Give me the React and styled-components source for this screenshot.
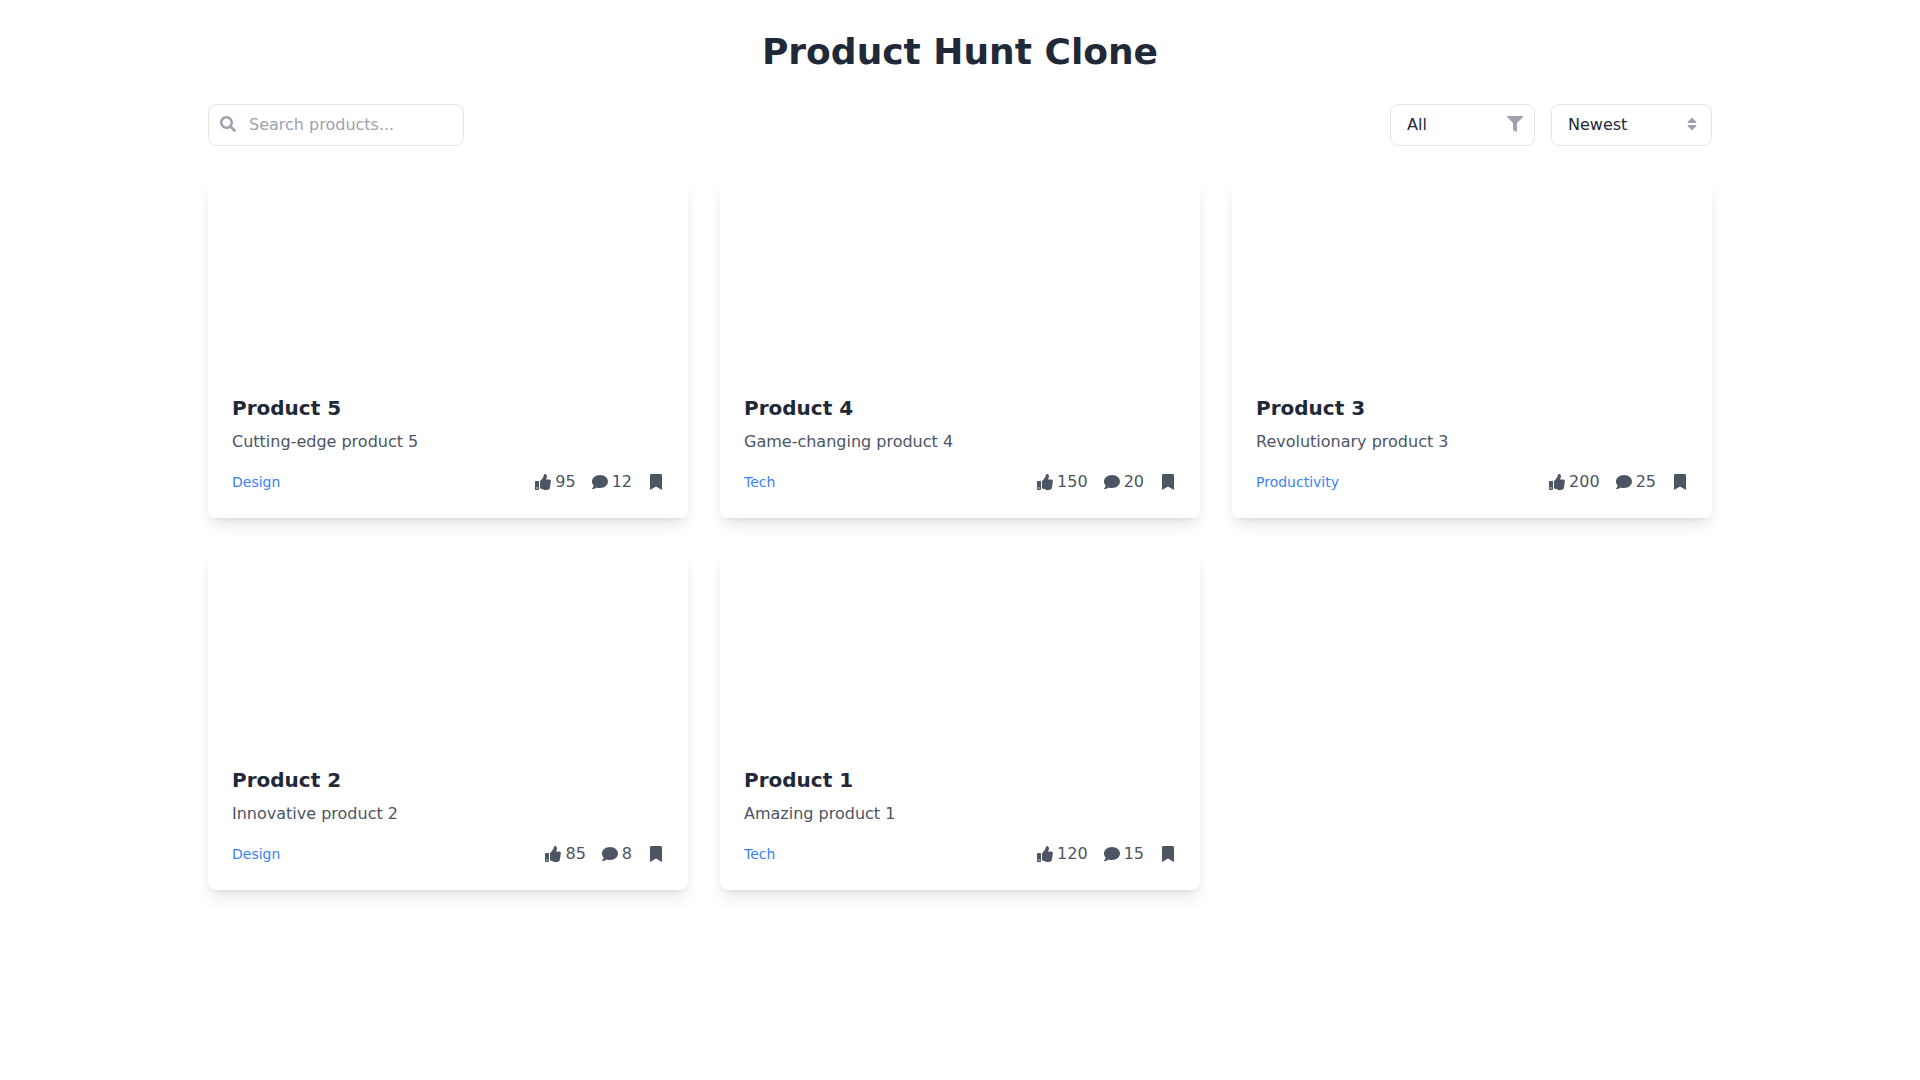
import React from 'react'
import styled, { createGlobalStyle } from 'styled-components'
import { FaSearch, FaFilter, FaSort, FaThumbsUp, FaComment, FaBookmark } from 'react-icons/fa'

const GlobalStyle = createGlobalStyle`
    * { box-sizing: border-box; }
    body {
        margin: 0;
        background: #ffffff;
        font-family: "DejaVu Sans", sans-serif;
        line-height: 24px;
    }
`;

const Page = styled.div`
    width: 1536px;
    margin: 0 auto;
    padding: 32px 16px;
`;

const Title = styled.h1`
    margin: 0 0 32px;
    font-size: 36px;
    line-height: 40px;
    font-weight: 700;
    text-align: center;
    color: #1f2937;
`;

const Toolbar = styled.div`
    display: flex;
    justify-content: space-between;
    align-items: center;
    margin-bottom: 32px;
`;

const SearchBox = styled.div`
    position: relative;
    width: 256px;
    height: 42px;
    color: #9ca3af;
`;

const SearchInput = styled.input`
    width: 100%;
    height: 100%;
    padding: 7px 16px 9px 40px;
    border: 1px solid #e5e7eb;
    border-radius: 8px;
    font-family: inherit;
    font-size: 16px;
    line-height: 24px;
    background: #ffffff;
    outline: none;

    &::placeholder { color: #9ca3af; opacity: 1; }
`;

const SearchIcon = styled(FaSearch)`
    position: absolute;
    left: 12px;
    top: 12px;
    width: 16px;
    height: 16px;
`;

const Filters = styled.div`
    display: flex;
    gap: 16px;
`;

const Picker = styled.div`
    position: relative;
    width: ${props => props.width}px;
    height: 42px;

    svg {
        position: absolute;
        top: 12px;
        right: ${props => props.right}px;
        width: ${props => props.icon}px;
        height: 16px;
        color: #9ca3af;
        pointer-events: none;
    }
`;

const PickerSelect = styled.select`
    appearance: none;
    width: 100%;
    height: 100%;
    padding: 8px 32px 8px 16px;
    border: 1px solid #e5e7eb;
    border-radius: 8px;
    font-family: inherit;
    font-size: 16px;
    line-height: 24px;
    color: #1f2937;
    background: #ffffff;
    outline: none;
`;

const Grid = styled.div`
    display: grid;
    grid-template-columns: repeat(3, 1fr);
    gap: 32px;
`;

const Card = styled.div`
    border-radius: 8px;
    background: #ffffff;
    box-shadow: 0 10px 15px -3px rgba(0, 0, 0, 0.1), 0 4px 6px -4px rgba(0, 0, 0, 0.1);
    overflow: hidden;
`;

const Cover = styled.div`
    height: 192px;
`;

const CardBody = styled.div`
    padding: 24px;
`;

const Name = styled.h2`
    margin: 0 0 8px;
    font-size: 20px;
    line-height: 28px;
    font-weight: 700;
    color: #1f2937;
`;

const Description = styled.p`
    margin: 0 0 16px;
    font-size: 16px;
    line-height: 24px;
    color: #4b5563;
`;

const Footer = styled.div`
    display: flex;
    justify-content: space-between;
    align-items: center;
`;

const Category = styled.span`
    font-size: 14px;
    line-height: 20px;
    color: #3b82f6;
`;

const Stats = styled.div`
    display: flex;
    align-items: center;
    gap: 16px;
    color: #4b5563;
    font-size: 16px;
    line-height: 24px;
`;

const Stat = styled.span`
    display: flex;
    align-items: center;
    gap: 4px;
`;

const products = [
    { name: 'Product 5', text: 'Cutting-edge product 5', category: 'Design', votes: 95, comments: 12 },
    { name: 'Product 4', text: 'Game-changing product 4', category: 'Tech', votes: 150, comments: 20 },
    { name: 'Product 3', text: 'Revolutionary product 3', category: 'Productivity', votes: 200, comments: 25 },
    { name: 'Product 2', text: 'Innovative product 2', category: 'Design', votes: 85, comments: 8 },
    { name: 'Product 1', text: 'Amazing product 1', category: 'Tech', votes: 120, comments: 15 },
];

function ProductCard({ product }) {
    return <Card>
        <Cover />
        <CardBody>
            <Name>{product.name}</Name>
            <Description>{product.text}</Description>
            <Footer>
                <Category>{product.category}</Category>
                <Stats>
                    <Stat><FaThumbsUp size={16} />{product.votes}</Stat>
                    <Stat><FaComment size={16} />{product.comments}</Stat>
                    <FaBookmark size={16} />
                </Stats>
            </Footer>
        </CardBody>
    </Card>;
}

export default function App() {
    return <Page>
        <GlobalStyle />
        <Title>Product Hunt Clone</Title>
        <Toolbar>
            <SearchBox>
                <SearchIcon />
                <SearchInput placeholder="Search products..." />
            </SearchBox>
            <Filters>
                <Picker width={145} right={12} icon={16}>
                    <PickerSelect defaultValue="All"><option>All</option></PickerSelect>
                    <FaFilter />
                </Picker>
                <Picker width={161} right={15} icon={10}>
                    <PickerSelect defaultValue="Newest"><option>Newest</option></PickerSelect>
                    <FaSort />
                </Picker>
            </Filters>
        </Toolbar>
        <Grid>
            {products.map(p => <ProductCard key={p.name} product={p} />)}
        </Grid>
    </Page>;
}
